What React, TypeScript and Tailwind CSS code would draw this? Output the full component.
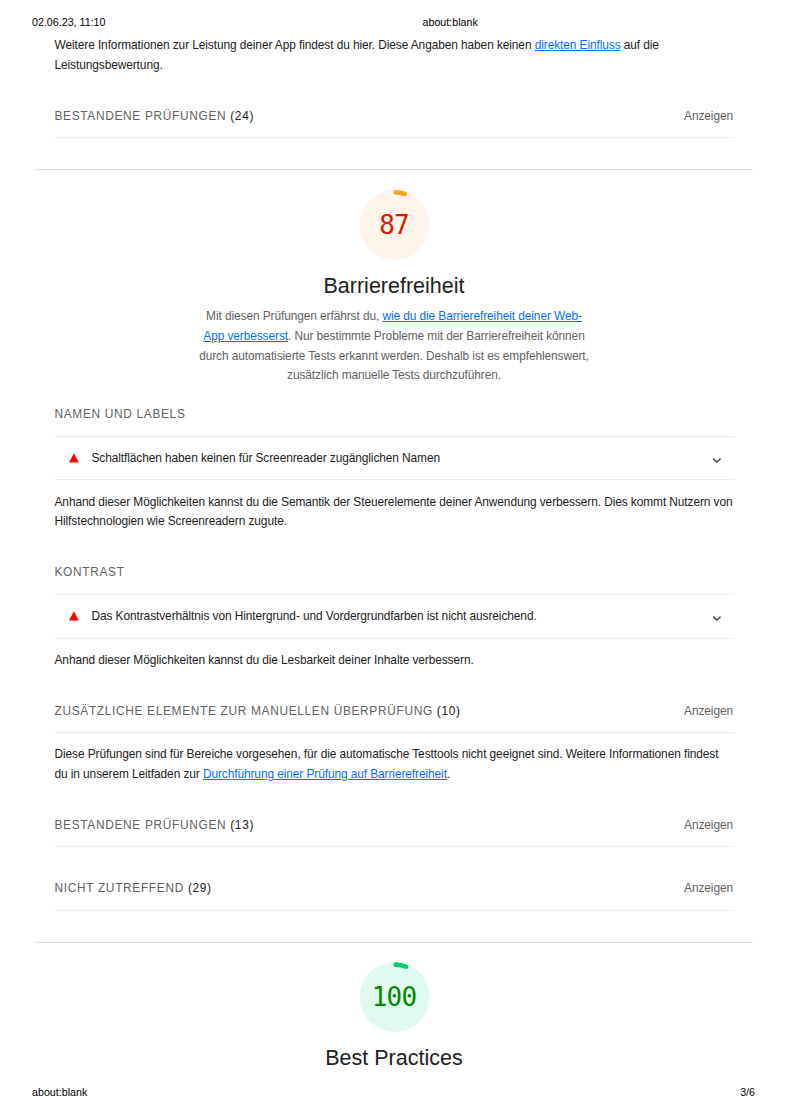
import type { ReactNode } from "react";

function Link({ children }: { children: ReactNode }) {
  return (
    <a href="#" className="text-[#0070ff] underline">
      {children}
    </a>
  );
}

function GroupHeader({
  title,
  count,
  toggle = false,
  className = "pt-px",
}: {
  title: string;
  count?: number;
  toggle?: boolean;
  className?: string;
}) {
  return (
    <div className={`flex h-11 items-center justify-between border-b border-[#ebebeb] pr-[1.5px] whitespace-nowrap ${className}`}>
      <h2 className="text-[11.9px] tracking-[0.67px] text-[#616161] uppercase">
        {title}
        {count !== undefined && <span className="text-[#212121]"> ({count})</span>}
      </h2>
      {toggle && <button className="text-[11.9px] tracking-[-0.08px] text-[#616161]">Anzeigen</button>}
    </div>
  );
}

function Audit({ children, className }: { children: ReactNode; className: string }) {
  return (
    <div className={`flex items-center border-b border-[#ebebeb] pr-[13px] pl-3.5 ${className}`}>
      <svg className="mr-[13px] size-2.5 shrink-0" viewBox="0 0 10 10">
        <path d="M4.9 0.2 9.8 9.6H0z" fill="#f00" />
      </svg>
      <span className="mt-0.5 grow whitespace-nowrap">{children}</span>
      <svg className="mt-1 h-2.5 w-2.5 shrink-0" viewBox="0 0 10 10" fill="none" stroke="#616161" strokeWidth="1.7">
        <path d="M1 3.6 4.8 7 8.6 3.6" />
      </svg>
    </div>
  );
}

function Gauge({
  score,
  title,
  fill,
  stroke,
  text,
  arc,
  className,
}: {
  score: number;
  title: string;
  fill: string;
  stroke: string;
  text: string;
  arc: string;
  className: string;
}) {
  return (
    <div className={`flex flex-col items-center ${className}`}>
      <div className="grid size-[70px] place-items-center">
        <svg className="col-start-1 row-start-1 size-[70px] overflow-visible" viewBox="0 0 70 70">
          <circle cx="34.6" cy="35" r="35" fill={fill} />
          <path d={arc} fill="none" stroke={stroke} strokeWidth="4.6" strokeLinecap="round" />
        </svg>
        <span className={`col-start-1 row-start-1 pr-px font-['DejaVu_Sans_Mono',monospace] text-[26px] leading-none tracking-[-0.8px] ${text}`}>
          {score}
        </span>
      </div>
      <h1 className="mt-3 pr-px text-[21.5px] leading-7 tracking-normal whitespace-nowrap text-[#212121]">{title}</h1>
    </div>
  );
}

function Separator() {
  return <div className="mt-[31px] mr-[-18.5px] ml-[-19.5px] h-px bg-[#dedede]" />;
}

export default function App() {
  return (
    <div className="flex h-[1116px] w-[788px] flex-col overflow-hidden bg-white font-['Liberation_Sans',Arial,sans-serif] text-[11.9px] leading-[19.7px] tracking-[-0.083px] text-[#212121]">
      <header className="grid h-[35px] grid-cols-[390.5px_1fr] pt-[13px] pl-8 text-[10.7px] leading-[18px] tracking-normal text-black">
        <span>02.06.23, 11:10</span>
        <span>about:blank</span>
      </header>

      <main className="mr-[53.5px] ml-[54.5px] flex h-[1045px] flex-col">
        <p className="h-[59px] pt-px whitespace-nowrap">
          Weitere Informationen zur Leistung deiner App findest du hier. Diese Angaben haben keinen{" "}
          <Link>direkten Einfluss</Link> auf die
          <br />
          Leistungsbewertung.
        </p>
        <GroupHeader className="pt-[3px]" title="Bestandene Prüfungen" count={24} toggle />
        <Separator />

        <Gauge
          className="pt-5"
          score={87}
          title="Barrierefreiheit"
          fill="#fff4e9"
          stroke="#ffa41f"
          text="text-[#d91c00]"
          arc="M35.8 2.4A32.7 32.7 0 0 1 44.6 3.8"
        />
        <p className="h-[93px] pt-[7.2px] pr-px text-center whitespace-nowrap text-[#616161]">
          Mit diesen Prüfungen erfährst du, <Link>wie du die Barrierefreiheit deiner Web-</Link>
          <br />
          <Link>App verbesserst</Link>. Nur bestimmte Probleme mit der Barrierefreiheit können
          <br />
          durch automatisierte Tests erkannt werden. Deshalb ist es empfehlenswert,
          <br />
          zusätzlich manuelle Tests durchzuführen.
        </p>

        <GroupHeader title="Namen und Labels" />
        <Audit className="h-[43px]">Schaltflächen haben keinen für Screenreader zugänglichen Namen</Audit>
        <p className="h-[71px] pt-[13.2px] leading-[19px] whitespace-nowrap">
          Anhand dieser Möglichkeiten kannst du die Semantik der Steuerelemente deiner Anwendung verbessern. Dies kommt
          Nutzern von
          <br />
          Hilfstechnologien wie Screenreadern zugute.
        </p>

        <GroupHeader title="Kontrast" />
        <Audit className="h-11 pb-px">
          Das Kontrastverhältnis von Hintergrund- und Vordergrundfarben ist nicht ausreichend.
        </Audit>
        <p className="h-[50px] pt-3">Anhand dieser Möglichkeiten kannst du die Lesbarkeit deiner Inhalte verbessern.</p>

        <GroupHeader className="pt-[3px]" title="Zusätzliche Elemente zur manuellen Überprüfung" count={10} toggle />
        <p className="h-[70px] pt-3 whitespace-nowrap">
          Diese Prüfungen sind für Bereiche vorgesehen, für die automatische Testtools nicht geeignet sind. Weitere
          Informationen findest
          <br />
          du in unserem Leitfaden zur <Link>Durchführung einer Prüfung auf Barrierefreiheit</Link>.
        </p>

        <GroupHeader className="pt-[3px]" title="Bestandene Prüfungen" count={13} toggle />
        <div className="h-5" />
        <GroupHeader title="Nicht zutreffend" count={29} toggle />
        <Separator />

        <Gauge
          className="pt-[19px]"
          score={100}
          title="Best Practices"
          fill="#e0faf1"
          stroke="#00ce6b"
          text="text-[#008a00]"
          arc="M35.8 2.6A32.7 32.7 0 0 1 46 4.6"
        />
      </main>

      <footer className="flex justify-between pt-[3px] pr-[33px] pl-8 text-[10.7px] leading-[18px] tracking-normal text-black">
        <span>about:blank</span>
        <span>3/6</span>
      </footer>
    </div>
  );
}
